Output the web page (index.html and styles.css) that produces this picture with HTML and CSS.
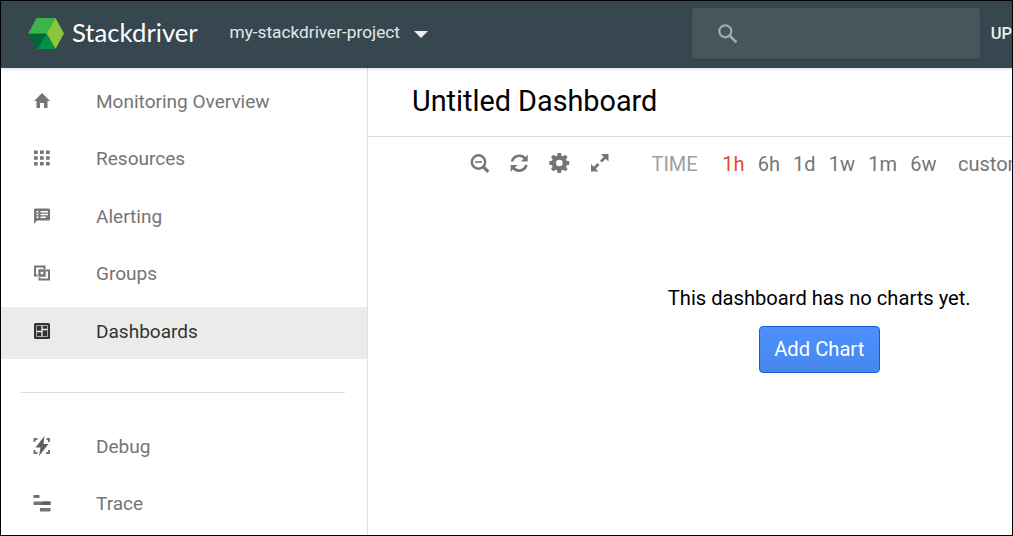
FILE: index.html
```html
<!DOCTYPE html>
<html lang="en">
<head>
<meta charset="utf-8">
<title>Stackdriver</title>
<link rel="stylesheet" href="styles.css">
</head>
<body>
<div class="app">
  <header class="topbar">
    <svg class="logo" width="36" height="31" viewBox="0 0 36 31">
      <path fill="#3ab54a" d="M8.500 0H27.500L18.500 15.700H0z"/>
      <path fill="#8cc63f" d="M27.500 0L36 15.500L27.500 31L18.500 15.500z"/>
      <path fill="#006837" d="M0 15.700H18.500L9.500 31H8.500z"/>
      <path fill="#009245" d="M18.500 15.700L27.500 31H9.500z"/>
    </svg>
    <span class="brand">Stackdriver</span>
    <span class="project">my-stackdriver-project</span>
    <svg class="caret" width="14" height="7" viewBox="0 0 14 7"><path fill="#eceff1" d="M0 0H14L7 7z"/></svg>
    <div class="search">
      <svg width="20" height="20" viewBox="0 0 20 20" fill="none" stroke="#a3abae">
        <circle cx="7.300" cy="7.300" r="6" stroke-width="2.200"/><path d="M11.600 11.600L18.400 18.400" stroke-width="2.700"/>
      </svg>
    </div>
    <span class="upgrade">UP</span>
  </header>
  <div class="body">
    <nav class="sidebar">
      <a class="item"><svg class="icon" viewBox="0 0 18 18"><path d="M9 1L17 9H14.500V16H11V11H7V16H3.500V9H1z"/></svg><span>Monitoring Overview</span></a>
      <a class="item"><svg class="icon" viewBox="0 0 18 18"><path d="M1 .5h3.700v3.500H1zM7 .5h3.700v3.500H7zM13 .5h3.700v3.500H13zM1 6.200h3.700v3.500H1zM7 6.200h3.700v3.500H7zM13 6.200h3.700v3.500H13zM1 11.900h3.700v3.500H1zM7 11.900h3.700v3.500H7zM13 11.900h3.700v3.500H13z"/></svg><span>Resources</span></a>
      <a class="item"><svg class="icon" viewBox="0 0 18 18"><path fill-rule="evenodd" transform="translate(0 .5)" d="M2.500 1H15.500Q17 1 17 2.500V11.500Q17 13 15.500 13H4L1 16.500V2.500Q1 1 2.500 1zM3.500 3.500v1.500h2V3.500zM3.500 6.300v1.500h2V6.300zM3.500 9v1.500h2V9zM7.500 3.500v1.500H15V3.500zM7.500 6.300v1.500H15V6.300zM7.500 9v1.500H13V9z"/></svg><span>Alerting</span></a>
      <a class="item"><svg class="icon line" viewBox="0 0 18 18"><path stroke-width="2" d="M4.500 10.500H2V1.500H11.500V4M13 5.500H16V14.500H6.500V12.500"/><path stroke-width="2.300" d="M6.500 5.500H11.500V10.500H6.500z"/></svg><span>Groups</span></a>
      <a class="item active"><svg class="icon" viewBox="0 0 18 18"><rect x="1" y="1" width="16" height="16" rx="1.500" fill="#333"/><path fill="none" stroke="#a5a5a5" stroke-width="1" d="M3.500 3.500H14.500V14.500H3.500z"/><path fill="none" stroke="#eee" stroke-width="1.300" d="M9 3.600V14.400M3.600 9.500H9M9 7.500H14.400"/></svg><span>Dashboards</span></a>
      <hr class="rule">
      <a class="item"><svg class="icon" viewBox="0 0 18 18"><path fill="none" stroke="#757575" stroke-width="2" d="M1.500 5V2H4.500M13.500 2H16V5M16 13V16H13M4.500 16H1.500V13"/><path fill="#616161" d="M11.500 -1L2.500 10.500H7.500L6 19L15.500 7H10.500z"/></svg><span>Debug</span></a>
      <a class="item"><svg class="icon" viewBox="0 0 18 18"><path d="M.5 0h6v3h-6zM.5 6.500h17v3.500H.5zM7 13h10.500v3.500H7z"/><path fill="#616161" d="M9 6.500h8.500v3.500H9z"/></svg><span>Trace</span></a>
    </nav>
    <main class="main">
      <h1 class="title">Untitled Dashboard</h1>
      <div class="toolbar">
        <svg class="tool line" viewBox="0 0 20 20"><circle cx="8.500" cy="8" r="6.700" stroke-width="2.500"/><path stroke-width="3.200" d="M13.300 12.800L18.300 17.800"/><path stroke-width="1.600" d="M5 8H12"/></svg>
        <svg class="tool" viewBox="0 0 20 20"><path fill="none" stroke="#757575" stroke-width="2.700" d="M2 7.500A7.500 7.500 0 0 1 15.200 4.700M16.400 10.900A7.500 7.500 0 0 1 3.200 13.700"/><path d="M17.700 .7V7.500H10.900zM.7 17.700V10.900H7.500z"/></svg>
        <svg class="tool" viewBox="0 0 20 20"><path fill-rule="evenodd" transform="translate(-.7 -1)" d="M8.300 0h3.400l.5 2.700 1.500.6L16 1.700 18.300 4l-1.600 2.300.6 1.500 2.700.5v3.400l-2.700.5-.6 1.500L18.300 16 16 18.300l-2.300-1.600-1.500.6-.5 2.700H8.300l-.5-2.700-1.500-.6L4 18.300 1.700 16l1.600-2.300-.6-1.500L0 11.700V8.300l2.700-.5.600-1.500L1.700 4 4 1.700l2.300 1.600 1.500-.6zM10 6.700a3.300 3.300 0 1 0 0 6.600a3.300 3.300 0 1 0 0-6.600z"/></svg>
        <svg class="tool" viewBox="0 0 20 20"><path d="M11 0H18.500V7.500zM1 10V17.500H8.500z"/><path fill="none" stroke="#757575" stroke-width="2.700" d="M16 2.500L11 7.500M8.500 10L3.500 15"/></svg>
        <span class="label">TIME</span>
        <div class="ranges"><span class="on">1h</span><span>6h</span><span>1d</span><span>1w</span><span>1m</span><span>6w</span></div>
        <span class="custom">custom</span>
      </div>
      <section class="empty">
        <p>This dashboard has no charts yet.</p>
        <button class="add">Add Chart</button>
      </section>
    </main>
  </div>
</div>
</body>
</html>
```
FILE: styles.css
```css
* { box-sizing: border-box; }
body { margin: 0; font-family: Roboto, "Liberation Sans", sans-serif; }
.app { width: 1013px; height: 536px; border: 1px solid #000; overflow: hidden; display: flex; flex-direction: column; background: #fff; }
.topbar { height: 67px; flex: none; display: flex; align-items: center; background: #37474f; color: #eceff1; white-space: nowrap; position: relative; box-shadow: 0 1px 3px rgba(0, 0, 0, .15); }
.logo { margin-left: 27px; margin-top: -2px; flex: none; overflow: visible; }
.brand { width: 125px; margin-left: 8px; margin-top: -5px; font: 25.700px/30px Lato, Roboto, sans-serif; color: #fff; }
.project { width: 171px; margin-left: 32.500px; margin-top: -6px; font-size: 17.250px; line-height: 24px; color: #e3e7e9; }
.caret { margin-left: 13.500px; flex: none; }
.search { width: 288px; height: 51px; flex: none; margin-left: 264px; margin-top: -2px; padding-left: 26px; display: flex; align-items: center; border-radius: 3px; background: #47555c; box-shadow: 0 1px 2px rgba(0, 0, 0, .15); }
.upgrade { margin-left: 11px; margin-top: -2px; font-size: 16.500px; font-weight: 500; color: #eceff1; }
.body { flex: 1; display: flex; min-height: 0; }
.sidebar { width: 367px; flex: none; border-right: 1px solid #e0e0e0; padding-top: 9px; display: flex; flex-direction: column; gap: 5.500px; }
.item { height: 52px; flex: none; display: flex; align-items: center; padding: 0 0 3px 32px; gap: 45px; font-size: 19.050px; line-height: 24px; color: #757575; }
.active { background: #ebebeb; color: #333; }
.icon { width: 18px; height: 18px; margin-top: -1px; flex: none; fill: #757575; overflow: visible; }
.icon.line, .tool.line { fill: none; stroke: #757575; }
.rule { width: 324px; height: 1px; margin: 27px 0 24px 20px; border: 0; background: #dadada; flex: none; }
.main { flex: 1; min-width: 0; display: flex; flex-direction: column; }
.title { height: 69px; margin: 0; padding: 0 0 2px 44px; font-size: 28.800px; font-weight: 400; line-height: 66px; border-bottom: 1px solid #dadada; color: #000; }
.toolbar { height: 54px; display: flex; align-items: center; padding-left: 102px; white-space: nowrap; font-size: 20px; color: #757575; }
.tool { width: 20px; height: 20px; margin-right: 20px; flex: none; fill: #757575; overflow: visible; }
.label { width: 47px; margin: 0 24.500px 0 21.500px; color: #9e9e9e; }
.ranges { display: flex; gap: 13.200px; }
.on { color: #dd4b39; }
.custom { margin-left: 21.500px; }
.empty { display: flex; flex-direction: column; align-items: center; width: 902.500px; padding-top: 95px; gap: 16px; }
.empty p { margin: 0; font-size: 20.150px; line-height: 24px; color: #000; }
.add { width: 121px; height: 47px; padding: 0 0 2px; border: 1px solid #175bd8; border-radius: 4px; background: linear-gradient(#4d90fe, #4787ed); color: #fff; font: 20.200px Roboto, sans-serif; }
```
